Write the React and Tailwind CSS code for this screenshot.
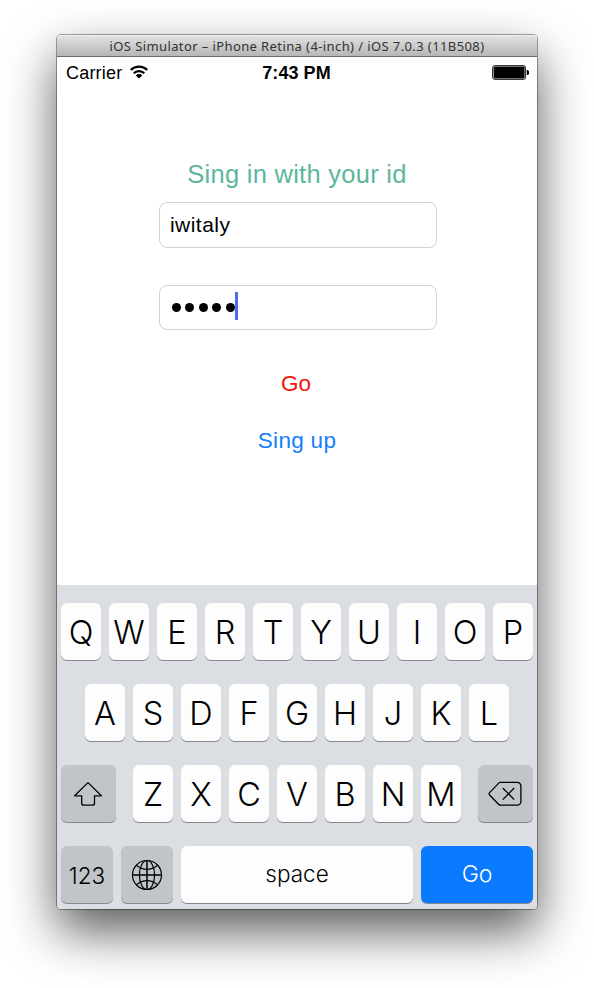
const helv = "font-['Liberation_Sans',Arial,sans-serif]";
const light = "font-['Inter',sans-serif] font-light";

function Key({ children, className = "w-[40px] bg-[#fdfdfd] pt-[3px] text-[32.5px]" }) {
  return (
    <div
      className={`flex h-[57px] shrink-0 items-center justify-center rounded-[6px] leading-none text-black shadow-[0_1px_0_#85888c] ${light} ${className}`}
    >
      {children}
    </div>
  );
}

function Letters({ row }) {
  return row.split("").map((c) => <Key key={c}>{c}</Key>);
}

function StatusBar() {
  return (
    <div className={`flex h-8 items-center justify-between pr-2 pl-[9px] text-black ${helv}`}>
      <div className="flex w-[149px] items-center gap-[8px]">
        <span className="text-[18px] leading-8 tracking-[0.2px]">Carrier</span>
        <svg width="18" height="14" viewBox="0 0 18 14" className="mb-0.5" fill="none" stroke="#000" strokeWidth="2.3">
          <path d="M0.8 5a11.7 11.7 0 0 1 16.4 0" />
          <path d="M3.7 8.3a7.5 7.5 0 0 1 10.6 0" />
          <path d="M9 13.5L5.7 10.4a4.6 4.6 0 0 1 6.6 0z" fill="#000" stroke="none" />
        </svg>
      </div>
      <span className="text-[18px] leading-8 font-bold tracking-[0.05px]">7:43 PM</span>
      <div className="flex w-[151px] justify-end">
        <svg width="37" height="15" viewBox="0 0 37 15" className="mb-0.5">
          <rect x="0.6" y="0.6" width="33" height="13.8" rx="2.2" fill="#fff" stroke="#222" strokeWidth="1" />
          <rect x="1.6" y="1.6" width="31" height="11.8" rx="1" />
          <path d="M34.8 5h0.6a1.6 2.4 0 0 1 0 5h-0.6z" />
        </svg>
      </div>
    </div>
  );
}

function Keyboard() {
  return (
    <div className="flex h-[324px] flex-col gap-6 rounded-b-[4px] bg-[#dbdee2] px-1 pt-[18px]">
      <div className="flex justify-between">
        <Letters row="QWERTYUIOP" />
      </div>
      <div className="flex justify-between px-6">
        <Letters row="ASDFGHJKL" />
      </div>
      <div className="flex justify-between">
        <Key className="w-[55px] bg-[#c1c5c9] pr-[2px]">
          <svg width="30" height="26" viewBox="0 0 30 26" fill="none" stroke="#000" strokeWidth="1.3" strokeLinejoin="round">
            <path d="M15 1.6L28.4 14.8H21.5V22.2a2 2 0 0 1-2 2H10.7a2 2 0 0 1-2-2V14.8H1.6z" />
          </svg>
        </Key>
        <div className="flex gap-2">
          <Letters row="ZXCVBNM" />
        </div>
        <Key className="w-[55px] bg-[#c1c5c9] pr-[2px]">
          <svg width="34" height="26" viewBox="0 0 34 26" fill="none" stroke="#000" strokeWidth="1.3" strokeLinejoin="round">
            <path d="M12.4 1.4H29.3a3.6 3.6 0 0 1 3.6 3.6V20.6a3.6 3.6 0 0 1-3.6 3.6H12.4Q11.4 24.2 10.5 23.2L1.6 14Q0.6 12.8 1.6 11.6L10.5 2.4Q11.4 1.4 12.4 1.4z" />
            <path d="M14.8 7L26.2 18.6M26.2 7L14.8 18.6" />
          </svg>
        </Key>
      </div>
      <div className="flex gap-2">
        <Key className="w-[52px] bg-[#c1c5c9] pt-[3px] text-[22.5px]">123</Key>
        <Key className="w-[52px] bg-[#c1c5c9]">
          <svg width="32" height="32" viewBox="0 0 32 32" fill="none" stroke="#000" strokeWidth="1.2">
            <circle cx="16" cy="16" r="14.5" />
            <ellipse cx="16" cy="16" rx="7.6" ry="14.5" />
            <path d="M16 1.5V30.5M1.5 16H30.5" strokeWidth="1.5" />
            <path d="M5.2 6.2Q16 14.4 26.8 6.2M5.2 25.8Q16 17.6 26.8 25.8" />
          </svg>
        </Key>
        <Key className="w-[232px] bg-[#fdfdfd] text-[22.5px]">space</Key>
        <Key className="w-[112px] bg-[#0a7aff] text-[23px] text-white">Go</Key>
      </div>
    </div>
  );
}

export default function App() {
  return (
    <div className="h-[988px] w-[594px] overflow-hidden bg-white pt-[35px] pl-[57px]">
      <div className="h-[874px] w-[480px] rounded-t-[4px] rounded-b-[4px] bg-white shadow-[0_0_0_1px_rgba(0,0,0,0.35),0_22px_50px_rgba(0,0,0,0.65)]">
        <div className="flex h-[22px] items-center justify-center rounded-t-[4px] border-t border-b border-t-[#f0f0f0] border-b-[#6b6b6b] bg-linear-to-b from-[#e2e2e2] to-[#b6b6b6] pt-px font-['Noto_Sans',sans-serif] text-[13px] tracking-[0.4px] text-[#333]">
          <span className="whitespace-nowrap">iOS Simulator – iPhone Retina (4-inch) / iOS 7.0.3 (11B508)</span>
        </div>
        <StatusBar />
        <div className={`flex h-[496px] flex-col items-center pt-[69px] ${helv}`}>
          <h1 className="text-[25.5px] leading-8 tracking-[0.27px] text-[#5cb79c]">Sing in with your id</h1>
          <div className="mt-3 ml-[2px] flex h-[46px] w-[278px] items-center rounded-[8px] border border-[#d2d2d2] pb-px pl-[10px] text-[21px] tracking-[0.45px] text-black">
            iwitaly
          </div>
          <div className="mt-[37px] ml-[2px] flex h-[45px] w-[278px] items-center rounded-[8px] border border-[#d2d2d2] pl-3">
            <div className="flex gap-[4.4px]">
              {[0, 1, 2, 3, 4].map((i) => (
                <i key={i} className="size-[9px] rounded-full bg-black" />
              ))}
            </div>
            <i className="mb-[3px] h-7 w-[3px] bg-[#4a6cf0]" />
          </div>
          <div className="mt-[38px] mr-[2px] text-[22.5px] leading-8 text-[#f5120d]">Go</div>
          <div className="mt-[25px] text-[22.5px] leading-8 tracking-[0.3px] text-[#147efb]">Sing up</div>
        </div>
        <Keyboard />
      </div>
    </div>
  );
}
